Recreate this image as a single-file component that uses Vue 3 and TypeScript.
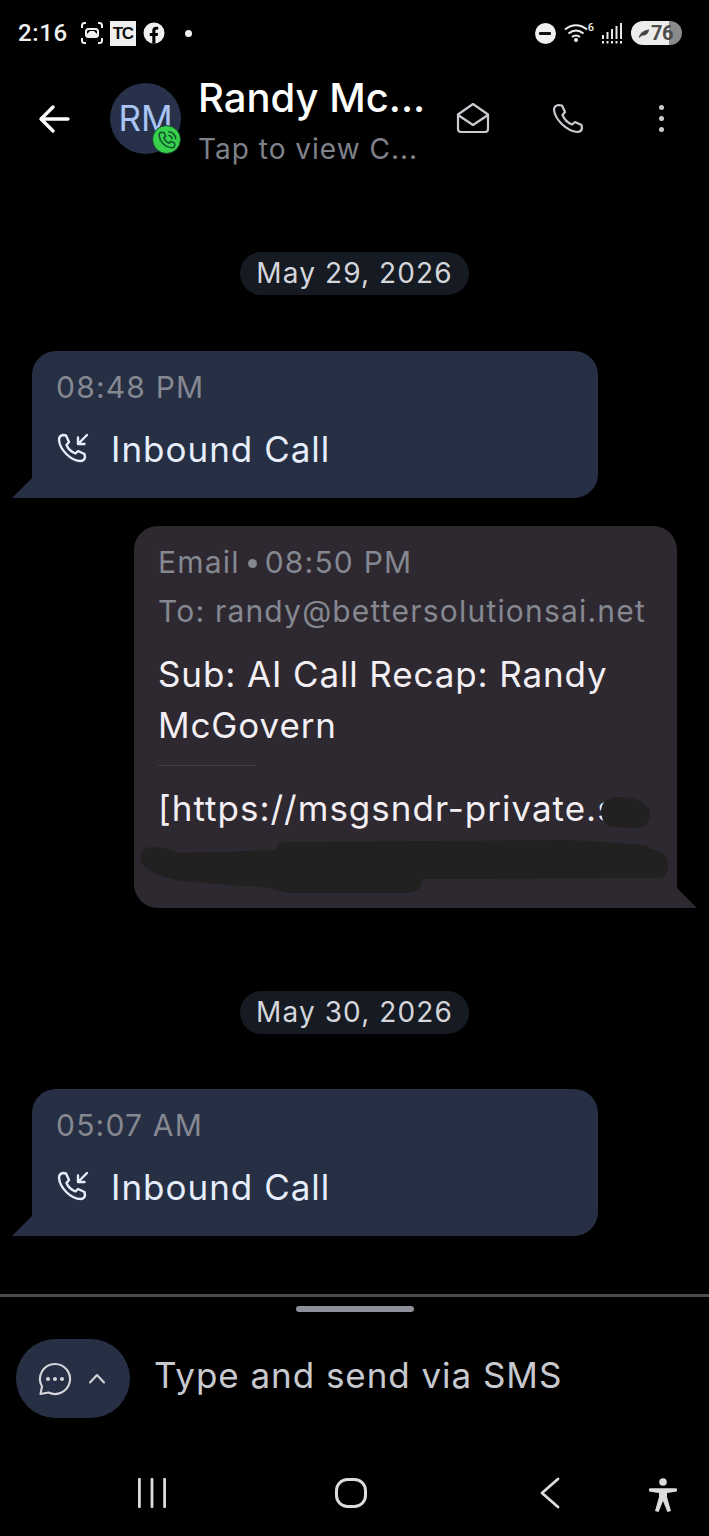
<script setup lang="ts">
interface Call { time: string }
const firstCall: Call = { time: '08:48 PM' }
const secondCall: Call = { time: '05:07 AM' }
</script>

<template>
  <div class="phone">
    <div class="status">
      <div class="status-left">
        <span class="clock">2:16</span>
        <svg class="ic-shot" width="24" height="24" viewBox="0 0 24 24" fill="none" stroke="#f0f0f0" stroke-width="2">
          <path d="M2 7V4.500Q2 2 4.500 2H6M18 2h1.500Q22 2 22 4.500V7M2 17v2.500Q2 22 4.500 22H6M18 22h1.500Q22 22 22 19.500V17" />
          <rect x="6" y="8" width="12" height="8" rx="2.500" />
          <path d="M7 13l3-3h4l3 3v2H7z" fill="#f0f0f0" stroke="none" />
        </svg>
        <span class="tc">TC</span>
        <svg width="22" height="22" viewBox="0 0 22 22">
          <circle cx="11" cy="11" r="10.500" fill="#f0f0f0" />
          <path d="M9.300 21.500V14H6.800v-3h2.500V8.700c0-2.600 1.500-4 3.800-4 1.100 0 2.100.2 2.100.2v2.500h-1.200c-1.200 0-1.600.8-1.600 1.500V11h2.700l-.4 3h-2.300v7.500z" fill="#000" />
        </svg>
        <span class="dot"></span>
      </div>
      <div class="status-right">
        <span class="dnd"><span></span></span>
        <svg width="32" height="20" viewBox="0 0 32 20" fill="none" stroke="#f0f0f0" stroke-width="2">
          <path d="M1 6.500Q12-2 23 6.500M4.500 10.500Q12 4.500 19.500 10.500M8 14Q12 11 16 14" />
          <circle cx="12" cy="17" r="2" fill="#f0f0f0" stroke="none" />
        </svg>
        <span class="net">6</span>
        <svg class="signal" width="21" height="21" viewBox="0 0 21 21" fill="#e8e8e8">
          <rect x="0" y="12" width="2" height="4" /><rect x="4.500" y="9" width="2" height="7" />
          <rect x="9" y="6" width="2" height="10" /><rect x="13.500" y="3" width="2" height="13" />
          <rect x="18" y="0" width="2" height="16" />
          <rect x="0" y="18" width="2" height="2.500" /><rect x="4.500" y="18" width="2" height="2.500" />
          <rect x="9" y="18" width="2" height="2.500" /><rect x="13.500" y="18" width="2" height="2.500" />
          <rect x="18" y="18" width="2" height="2.500" />
        </svg>
        <span class="battery">
          <svg width="12" height="11" viewBox="0 0 14 12"><path d="M1 11Q2 3 13 1Q12 9 4 8.500L2 11z" fill="#444" /></svg>
          <span>76</span>
        </span>
      </div>
    </div>

    <header class="head">
      <svg class="back" width="34" height="30" viewBox="0 0 34 30" fill="none" stroke="#fff" stroke-width="3.400" stroke-linecap="round" stroke-linejoin="round">
        <path d="M31 15H4M16 3L4 15l12 12" />
      </svg>
      <div class="avatar">
        RM
        <span class="badge">
          <svg width="22" height="22" viewBox="0 0 24 24" fill="none" stroke="#11532a" stroke-width="1.700" stroke-linecap="round" stroke-linejoin="round">
            <path d="M6 3.500l3 .5 1.500 4-2 1.500c1 2.500 3.500 5 6 6l1.500-2 4 1.500.5 3c-.2 1.500-1.500 2.500-3 2.500C10 20 4 14 3.500 6.500 3.500 5 4.500 3.700 6 3.500z" />
            <path d="M14 7a4 4 0 0 1 3.500 3.500M14 3a8 8 0 0 1 7.500 7.500" />
          </svg>
        </span>
      </div>
      <div class="who">
        <div class="name">Randy Mc...</div>
        <div class="sub">Tap to view C...</div>
      </div>
      <svg class="h-mail" width="34" height="32" viewBox="0 0 34 32" fill="none" stroke="#c9cbd1" stroke-width="2.200" stroke-linejoin="round" stroke-linecap="round">
        <path d="M2 12.500L17 2l15 10.500V27a3 3 0 0 1-3 3H5a3 3 0 0 1-3-3z" />
        <path d="M2 13l15 10 15-10" />
      </svg>
      <svg class="h-phone" width="32" height="32" viewBox="0 0 32 32" fill="none" stroke="#c9cbd1" stroke-width="2.200" stroke-linejoin="round">
        <path d="M6.500 2L10 2.500l3 6.500-2.500 3c1.500 3.500 5.500 8 9.500 9.500l3-2.500 6.500 3 .5 3.500c-.5 2-2 3.500-4.500 3.500C14 28 3 16 2 7 2 4.500 4 2.500 6.500 2z" />
      </svg>
      <span class="h-more"><i></i><i></i><i></i></span>
    </header>

    <main class="thread">
      <div class="chip first">May 29, 2026</div>

      <article class="bubble in one">
        <div class="meta">{{ firstCall.time }}</div>
        <div class="call">
          <svg width="34" height="34" viewBox="0 0 34 34" fill="none" stroke="#e7eefb" stroke-width="2.400" stroke-linejoin="round" stroke-linecap="round">
            <path d="M7 3l3 .5 3 6.500-2.500 3c1.500 3.500 5 7 9 8.500l2.500-2.500 6.500 3 .5 3.500c-.5 2-2 3.500-4.500 3.500C15 29 4 18 3 8c0-2.500 1.500-4.500 4-5z" />
            <path d="M31 3l-9 9M22 5.500V12h6.500" />
          </svg>
          <span>Inbound Call</span>
        </div>
      </article>

      <article class="bubble out">
        <div class="meta email">Email<i></i>08:50 PM</div>
        <div class="meta to">To: randy@bettersolutionsai.net</div>
        <div class="subject">Sub: AI Call Recap: Randy McGovern</div>
        <div class="rule"></div>
        <div class="link">[https://msgsndr-private.s</div>
        <svg class="scribble" width="540" height="100" viewBox="0 0 540 100" fill="#212121">
          <path d="M467 16Q468 5 482 3Q512 3 516 18Q517 34 502 34L478 33Q467 30 467 16z" />
          <path d="M6 66Q6 53 18 53Q30 53 46 59L142 56Q142 49 150 48L437 46L512 51L516 55Q534 58 534 70Q534 84 523 84L288 85Q288 98 275 99L155 99L129 93L95 91L46 87Q12 80 6 66z" />
        </svg>
      </article>

      <div class="chip second">May 30, 2026</div>

      <article class="bubble in three">
        <div class="meta">{{ secondCall.time }}</div>
        <div class="call">
          <svg width="34" height="34" viewBox="0 0 34 34" fill="none" stroke="#e7eefb" stroke-width="2.400" stroke-linejoin="round" stroke-linecap="round">
            <path d="M7 3l3 .5 3 6.500-2.500 3c1.500 3.500 5 7 9 8.500l2.500-2.500 6.500 3 .5 3.500c-.5 2-2 3.500-4.500 3.500C15 29 4 18 3 8c0-2.500 1.500-4.500 4-5z" />
            <path d="M31 3l-9 9M22 5.500V12h6.500" />
          </svg>
          <span>Inbound Call</span>
        </div>
      </article>
    </main>

    <div class="divider"></div>
    <div class="handle"></div>

    <div class="composer">
      <div class="pill">
        <svg width="34" height="34" viewBox="0 0 34 34" fill="none" stroke="#d4d6db" stroke-width="2.100" stroke-linejoin="round">
          <path d="M17 2a15 15 0 1 1-6.500 28.500L2.500 32l1.500-7.500A15 15 0 0 1 17 2z" />
          <circle cx="10" cy="17" r="2" fill="#d4d6db" stroke="none" />
          <circle cx="17" cy="17" r="2" fill="#d4d6db" stroke="none" />
          <circle cx="24" cy="17" r="2" fill="#d4d6db" stroke="none" />
        </svg>
        <svg width="18" height="11" viewBox="0 0 18 11" fill="none" stroke="#d4d6db" stroke-width="2" stroke-linecap="round" stroke-linejoin="round">
          <path d="M2 9.500l7-7.500 7 7.500" />
        </svg>
      </div>
      <div class="placeholder">Type and send via SMS</div>
    </div>

    <nav class="nav">
      <svg class="n-recent" width="28" height="30" viewBox="0 0 28 30" fill="#dcdcde">
        <rect x="0" y="0" width="2.800" height="30" rx="1" /><rect x="12.600" y="0" width="2.800" height="30" rx="1" /><rect x="25.200" y="0" width="2.800" height="30" rx="1" />
      </svg>
      <svg class="n-home" width="32" height="30" viewBox="0 0 32 30" fill="none" stroke="#dcdcde" stroke-width="3">
        <rect x="1.500" y="1.500" width="29" height="27" rx="11" />
      </svg>
      <svg class="n-back" width="20" height="32" viewBox="0 0 20 32" fill="none" stroke="#dcdcde" stroke-width="2.800" stroke-linecap="round" stroke-linejoin="round">
        <path d="M18 2L2 16l16 14" />
      </svg>
      <svg class="n-access" width="28" height="34" viewBox="0 0 28 34" fill="#dcdcde">
        <circle cx="14" cy="4" r="3.800" />
        <path d="M1.500 10.300h25a1.200 1.200 0 0 1 0 3.400L18 15v4l4 14-3.600 1L14 23l-4.400 11L6 33l4-14v-4l-8.500-1.300a1.700 1.700 0 0 1 0-3.400z" />
      </svg>
    </nav>
  </div>
</template>

<style>
html, body { margin: 0; background: #000; }
</style>

<style scoped>
.phone {
  width: 709px;
  height: 1536px;
  background: #000;
  overflow: hidden;
  font-family: Inter, "Liberation Sans", sans-serif;
  display: flex;
  flex-direction: column;
}
.status {
  height: 66px;
  box-sizing: border-box;
  padding: 0 27px 0 18px;
  display: flex;
  align-items: center;
  justify-content: space-between;
  color: #f0f0f0;
}
.status-left, .status-right { display: flex; align-items: center; }
.clock { font: 500 24px Roboto, sans-serif; margin-right: 12px; letter-spacing: .6px; }
.ic-shot { margin-right: 6px; }
.tc {
  width: 26px; height: 25px; margin-right: 7px;
  background: #efefef; color: #111;
  font: 600 17px/25px "Liberation Sans", sans-serif; letter-spacing: -1.500px; text-align: center;
}
.dot { width: 7px; height: 7px; margin-left: 20px; border-radius: 50%; background: #f0f0f0; }
.dnd {
  width: 21px; height: 21px; margin-right: 8px; border-radius: 50%;
  background: #f0f0f0; display: flex; align-items: center; justify-content: center;
}
.dnd span { width: 12px; height: 3px; background: #111; border-radius: 1px; }
.net { font: 500 11px Roboto, sans-serif; margin: -12px 8px 0 -8px; }
.signal { margin-right: 8px; }
.battery {
  width: 51px; height: 24px; box-sizing: border-box; padding-left: 7px; border-radius: 12px;
  display: flex; align-items: center; gap: 1px;
  background: linear-gradient(90deg, #ececec 75%, #8a8a8a 75%);
  color: #4d4d4d; font: 700 20px Roboto, sans-serif; letter-spacing: -.5px;
}
.head {
  height: 106px;
  display: flex;
  align-items: center;
  position: relative;
}
.back { margin-left: 37px; margin-top: 0; }
.avatar {
  position: relative;
  width: 71px; height: 71px; margin: -1px 0 0 39px; border-radius: 50%;
  background: #27324a; color: #a9c4f5;
  display: flex; align-items: center; justify-content: center;
  font-size: 35px; line-height: 1;
}
.badge {
  position: absolute; right: 0; bottom: 0;
  width: 29px; height: 29px; border-radius: 50%;
  background: #37d14e; border: 1px solid #163c2c; box-sizing: border-box;
  display: flex; align-items: center; justify-content: center;
}
.who { margin-left: 17px; width: 240px; }
.name { color: #fff; font-size: 40px; font-weight: 500; line-height: 60px; white-space: nowrap; }
.sub { color: #7f828a; font-size: 28px; line-height: 42px; letter-spacing: 1px; white-space: nowrap; }
.h-mail { margin: -3px 0 0 18px; }
.h-phone { margin-left: 62px; }
.h-more { margin: -1px 0 0 75px; display: flex; flex-direction: column; gap: 6px; }
.h-more i { width: 5px; height: 5px; border-radius: 50%; background: #c9cbd1; }
.thread { flex: 0 0 1122px; display: flex; flex-direction: column; }
.chip {
  align-self: center;
  height: 43px; padding: 0 16px; border-radius: 22px;
  background: #151a23; color: #d4d6db;
  font-size: 28px; line-height: 43px; letter-spacing: 1.100px; white-space: nowrap;
  box-sizing: border-box;
}
.chip.first { margin-top: 80px; }
.chip.second { margin-top: 83px; }
.bubble { position: relative; box-sizing: border-box; }
.bubble::after {
  content: ""; position: absolute; bottom: 0; width: 20px; height: 20px;
}
.bubble.in {
  margin-left: 32px; width: 566px; height: 147px; padding: 19px 24px 0;
  background: #262f43; border-radius: 24px 24px 24px 0;
}
.bubble.in::after {
  left: -20px; background: #262f43; clip-path: polygon(100% 0, 100% 100%, 0 100%);
}
.bubble.one { margin-top: 56px; }
.bubble.three { margin-top: 55px; }
.bubble.out {
  margin-left: 134px; margin-top: 28px; width: 543px; height: 382px; padding: 19px 24px 0;
  background: #2e2930; border-radius: 24px 24px 0 24px;
}
.bubble.out::after {
  right: -20px; background: #2e2930; clip-path: polygon(0 0, 100% 100%, 0 100%);
}
.meta { color: #858891; font-size: 30px; line-height: 34px; letter-spacing: 1.200px; white-space: nowrap; }
.call { display: flex; align-items: center; margin-top: 23px; color: #e7eefb; font-size: 35px; line-height: 44px; letter-spacing: 1px; }
.call svg { margin-right: 21px; }
.email { display: flex; align-items: center; }
.email i { width: 9px; height: 9px; margin: 2px 8px 0; border-radius: 50%; background: #858891; }
.to { margin-top: 15px; letter-spacing: 1.200px; }
.subject { margin-top: 21px; color: #f3eff4; font-size: 35px; line-height: 51px; letter-spacing: .88px; }
.rule { margin-top: 14px; width: 98px; height: 1px; background: #423d45; }
.link { margin-top: 17px; color: #f3eff4; font-size: 35px; line-height: 50px; letter-spacing: 1px; white-space: nowrap; width: 490px; overflow: hidden; }
.scribble { position: absolute; left: 0; top: 268px; overflow: visible; }
.divider { height: 3px; background: #4b4b52; }
.handle { align-self: center; margin-top: 9px; width: 118px; height: 6px; border-radius: 3px; background: #8d9098; }
.composer { height: 79px; margin-top: 27px; display: flex; align-items: center; }
.pill {
  margin-left: 16px; width: 114px; height: 79px; border-radius: 40px; background: #262f43;
  display: flex; align-items: center; justify-content: center; gap: 16px; padding-right: 2px; box-sizing: border-box;
}
.placeholder { margin: -7px 0 0 24px; color: #c7c9cf; font-size: 35px; letter-spacing: .95px; white-space: nowrap; }
.nav { position: relative; flex: 1; }
.nav svg { position: absolute; }
.n-recent { left: 138px; top: 60px; }
.n-home { left: 335px; top: 60px; }
.n-back { left: 540px; top: 59px; }
.n-access { left: 649px; top: 60px; }
</style>
